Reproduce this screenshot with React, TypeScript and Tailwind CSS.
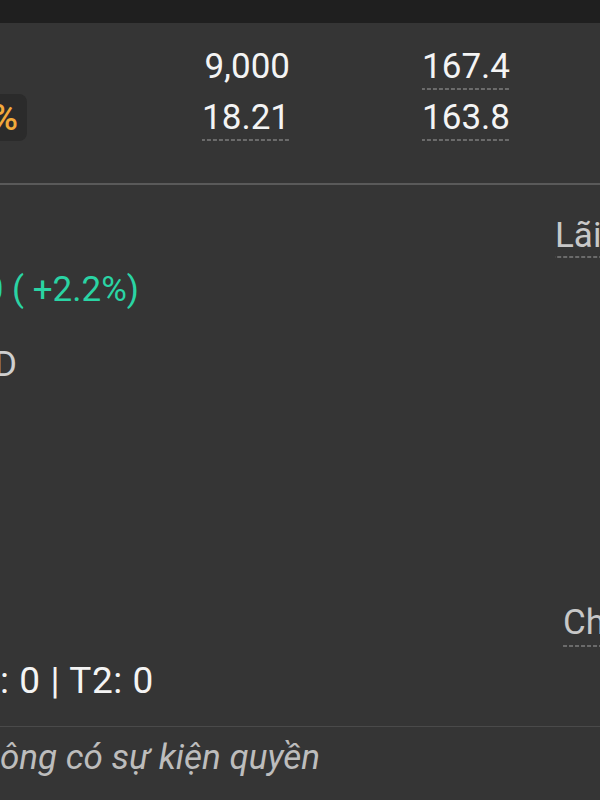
export default function App() {
  const dash =
    "bg-[linear-gradient(to_right,#6b6b6b_4px,transparent_4px)] bg-[length:6px_2px] bg-repeat-x bg-bottom";
  return (
    <div className="w-[600px] h-[800px] overflow-hidden bg-[#353535] font-[family-name:Roboto,sans-serif] text-[#f4f4f4]">
      <div className="h-[23px] bg-[#1f1f1f]" />
      <div className="h-[160px] pt-[24px] flex flex-col gap-[8px]">
        <div className="flex items-start h-[43px]">
          <div className="w-[290px] flex justify-end">
            <span className="text-[35px] leading-[40px] pb-[3px]">9,000</span>
          </div>
          <div className="w-[220px] flex justify-end">
            <span className={`text-[35px] leading-[40px] pb-[3px] ${dash}`}>167.4</span>
          </div>
        </div>
        <div className="flex items-start h-[43px]">
          <div className="w-[290px] flex justify-between items-start">
            <div className="w-[27px] flex justify-end -mt-[4px]">
              <div className="shrink-0 h-[47px] rounded-[8px] bg-[#2b2b2b] pl-[8px] pr-[9px] flex items-center">
                <span className="text-[36px] leading-none font-medium text-[#f2a93b]">%</span>
              </div>
            </div>
            <span className={`text-[35px] leading-[40px] pb-[3px] ${dash}`}>18.21</span>
          </div>
          <div className="w-[220px] flex justify-end">
            <span className={`text-[35px] leading-[40px] pb-[3px] ${dash}`}>163.8</span>
          </div>
        </div>
      </div>
      <div className="h-[2px] bg-[#5a5a5a]" />
      <div className="h-[541px] flex">
        <div className="flex-1 flex flex-col">
          <div className="mt-[85px] w-[139px] flex justify-end">
            <span className="shrink-0 whitespace-nowrap text-[35px] leading-[40px] text-[#2ad4a4]">0 ( +2.2%)</span>
          </div>
          <div className="mt-[35px] w-[17px] flex justify-end">
            <span className="shrink-0 whitespace-nowrap text-[35px] leading-[40px] text-[#cfcfcf]">D</span>
          </div>
          <div className="mt-[276px] flex">
            <span className="whitespace-nowrap text-[37px] leading-[40px] tracking-[0.6px] text-[#f4f4f4]">: 0 | T2: 0</span>
          </div>
        </div>
        <div className="w-[45px] shrink-0 flex flex-col">
          <div className="mt-[31px] flex">
            <span className={`whitespace-nowrap text-[35px] leading-[40px] pb-[2px] text-[#c8c8c8] ${dash}`}>Lãi</span>
          </div>
          <div className="mt-[345px] ml-[8px] flex">
            <span className={`whitespace-nowrap text-[35px] leading-[40px] pb-[4px] text-[#c8c8c8] ${dash}`}>Ch</span>
          </div>
        </div>
      </div>
      <div className="border-t border-[#4a4a4a] pt-[11px]">
        <span className="block whitespace-nowrap text-[35px] leading-[40px] italic text-[#bdbdbd]">ông có sự kiện quyền</span>
      </div>
    </div>
  );
}
